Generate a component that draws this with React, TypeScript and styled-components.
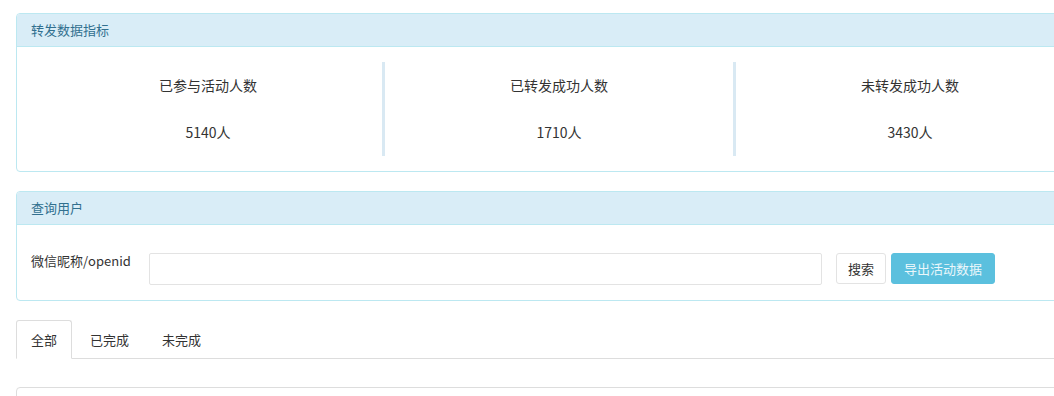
import React, { useState } from "react";
import styled, { createGlobalStyle } from "styled-components";

const GlobalStyle = createGlobalStyle`
  html, body {
    margin: 0;
    padding: 0;
    overflow: hidden;
    background: #fff;
  }
  body {
    font-family: "Noto Sans CJK SC", "Open Sans", sans-serif;
    font-size: 13px;
    color: #333;
  }
`;

const Page = styled.div`
  width: 1100px;
  padding: 13px 0 0 16px;
  box-sizing: border-box;
`;

const Panel = styled.div`
  width: 1085px;
  border: 1px solid #bce8f1;
  border-radius: 4px;
  background: #fff;
  margin-bottom: 19px;
  box-sizing: border-box;
`;

const PanelHeading = styled.div`
  height: 32px;
  line-height: 32px;
  padding: 0 14px;
  background: #d9edf7;
  border-bottom: 1px solid #bce8f1;
  color: #31708f;
  font-size: 13px;
  border-radius: 3px 3px 0 0;
`;

const StatsBody = styled.div`
  display: flex;
  padding: 15px 14px 15px;
`;

const StatCol = styled.div<{ $divided?: boolean }>`
  width: 351px;
  height: 94px;
  display: flex;
  flex-direction: column;
  align-items: center;
  padding-top: 13px;
  gap: 27px;
  box-sizing: border-box;
  border-left: 3px solid ${(p) => (p.$divided ? "#d9e9f3" : "transparent")};
`;

const StatText = styled.div`
  line-height: 20px;
  font-size: 14px;
  color: #333;
`;

const SearchBody = styled.div`
  display: flex;
  align-items: flex-start;
  padding: 28px 14px 15px;
`;

const Label = styled.label`
  width: 118px;
  line-height: 16px;
  color: #333;
  font-size: 13px;
`;

const Input = styled.input`
  width: 673px;
  height: 32px;
  border: 1px solid #e3e3e3;
  border-radius: 2px;
  box-sizing: border-box;
  outline: none;
  padding: 4px 8px;
  font: inherit;
`;

const Button = styled.button<{ $info?: boolean }>`
  height: 31px;
  margin-left: ${(p) => (p.$info ? "5px" : "14px")};
  padding: 0 ${(p) => (p.$info ? "12px" : "11px")};
  border: 1px solid ${(p) => (p.$info ? "#5bc0de" : "#e3e3e3")};
  border-radius: 3px;
  background: ${(p) => (p.$info ? "#5bc0de" : "#fff")};
  color: ${(p) => (p.$info ? "#eaf7fb" : "#333")};
  font-family: inherit;
  font-size: 13px;
  cursor: pointer;
`;

const TabBar = styled.div`
  display: flex;
  width: 1085px;
  border-bottom: 1px solid #ddd;
  margin-top: 19px;
`;

const Tab = styled.div<{ $active?: boolean }>`
  height: 37px;
  line-height: 37px;
  padding: 0 14px;
  margin: 0 3px -1px 0;
  border: 1px solid ${(p) => (p.$active ? "#ddd" : "transparent")};
  border-bottom-color: ${(p) => (p.$active ? "#fff" : "transparent")};
  border-radius: 3px 3px 0 0;
  background: ${(p) => (p.$active ? "#fff" : "transparent")};
  font-size: 13px;
  color: #333;
  cursor: pointer;
`;

const ListBox = styled.div`
  width: 1085px;
  height: 40px;
  margin-top: 28px;
  border: 1px solid #ddd;
  border-radius: 4px;
`;

const stats = [
  { label: "已参与活动人数", value: "5140人" },
  { label: "已转发成功人数", value: "1710人" },
  { label: "未转发成功人数", value: "3430人" },
];

const tabs = ["全部", "已完成", "未完成"];

export default () => {
  const [keyword, setKeyword] = useState("");
  const [activeTab, setActiveTab] = useState(0);

  return (
    <>
      <GlobalStyle />
      <Page>
        <Panel>
          <PanelHeading>转发数据指标</PanelHeading>
          <StatsBody>
            {stats.map((s, i) => (
              <StatCol key={s.label} $divided={i > 0}>
                <StatText>{s.label}</StatText>
                <StatText>{s.value}</StatText>
              </StatCol>
            ))}
          </StatsBody>
        </Panel>

        <Panel>
          <PanelHeading>查询用户</PanelHeading>
          <SearchBody>
            <Label>微信昵称/openid</Label>
            <Input value={keyword} onChange={(e) => setKeyword(e.target.value)} />
            <Button>搜索</Button>
            <Button $info>导出活动数据</Button>
          </SearchBody>
        </Panel>

        <TabBar>
          {tabs.map((t, i) => (
            <Tab key={t} $active={i === activeTab} onClick={() => setActiveTab(i)}>
              {t}
            </Tab>
          ))}
        </TabBar>
        <ListBox />
      </Page>
    </>
  );
};
